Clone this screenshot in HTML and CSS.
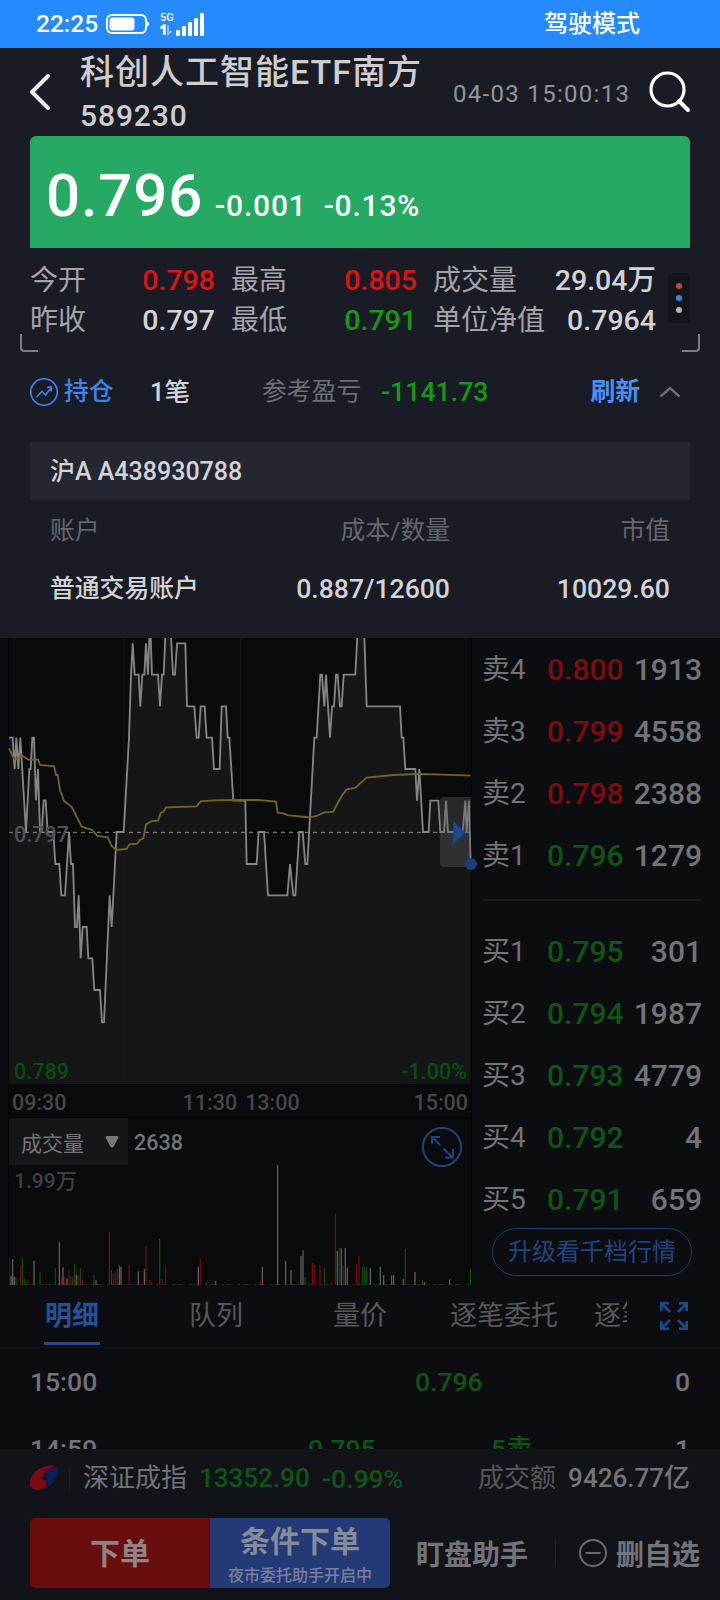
FILE: index.html
```html
<!DOCTYPE html>
<html lang="zh-CN">
<head>
    <meta charset="UTF-8">
    <title>科创人工智能ETF南方 589230</title>
    <meta name="viewport" content="width=device-width, initial-scale=1.0">
    <link rel="stylesheet" href="styles.css">
</head>
<body>
    <div class="status-bar">
        <span class="status-time">22:25</span>
        <svg class="status-battery" width="46" height="22" viewBox="0 0 46 22">
            <rect x="2" y="2" width="39" height="18" rx="5" fill="none" stroke="#fff" stroke-width="2"/>
            <rect x="4.500" y="4.500" width="25" height="13" rx="3" fill="#fff"/>
            <path d="M42 8.500c2.600 0 2.600 5 0 5z" fill="#fff"/>
        </svg>
        <div class="status-net">
            <span class="status-5g">5G</span>
            <svg width="12" height="12" viewBox="0 0 12 12" fill="none" stroke-width="2.800">
                <path d="M0.500 4.500L4.300 1.500V11" stroke="#fff"/>
                <path d="M8 1v9l3.500-3" stroke="#8fc2ff" stroke-width="2"/>
            </svg>
        </div>
        <svg class="status-signal" width="28" height="23" viewBox="0 0 28 23" fill="#fff">
            <rect x="0" y="17" width="4" height="6" rx="1"/>
            <rect x="6" y="13" width="4" height="10" rx="1"/>
            <rect x="12" y="9" width="4" height="14" rx="1"/>
            <rect x="18" y="5" width="4" height="18" rx="1"/>
            <rect x="24" y="0" width="4" height="23" rx="1"/>
        </svg>
        <span class="status-mode">驾驶模式</span>
    </div>

    <!-- Quote panel -->
    <div class="panel">
        <div class="header">
            <svg class="back" width="22" height="38" viewBox="0 0 22 38" fill="none" stroke="#ececf0" stroke-width="4" stroke-linecap="round" stroke-linejoin="round">
                <path d="M18 3L2 19l16 16"/>
            </svg>
            <div class="title">
                <div class="title-name">科创人工智能ETF南方</div>
                <div class="title-code">589230</div>
            </div>
            <span class="header-time">04-03 15:00:13</span>
            <svg class="search" width="42" height="42" viewBox="0 0 42 42" fill="none" stroke="#fff" stroke-linecap="round">
                <circle cx="18.500" cy="18.500" r="16.500" stroke-width="3.200"/>
                <path d="M30 30l9 9" stroke-width="4"/>
            </svg>
        </div>

        <div class="price-card">
            <span class="price">0.796</span>
            <span class="change">-0.001</span>
            <span class="change percent">-0.13%</span>
        </div>

        <div class="stats-wrap">
            <div class="stats">
                <span class="label">今开</span><span class="num red">0.798</span>
                <span class="label">最高</span><span class="num red">0.805</span>
                <span class="label">成交量</span><span class="num">29.04万</span>
                <span class="label">昨收</span><span class="num">0.797</span>
                <span class="label">最低</span><span class="num green">0.791</span>
                <span class="label">单位净值</span><span class="num">0.7964</span>
            </div>
            <div class="more"><i class="dot dot-red"></i><i class="dot dot-blue"></i><i class="dot"></i></div>
        </div>
        <div class="corners"><i class="corner corner-left"></i><i class="corner corner-right"></i></div>

        <div class="position">
            <svg width="28" height="28" viewBox="0 0 28 28" fill="none" stroke="#3c84ee" stroke-width="1.600">
                <circle cx="14" cy="14" r="13.200"/>
                <path d="M6.500 19l5.500-5.500 3.500 3.500 5.500-7M17 9.500l4.300-.5v4.500"/>
            </svg>
            <span class="position-name">持仓</span>
            <span class="position-count">1笔</span>
            <span class="position-label">参考盈亏</span>
            <span class="position-value">-1141.73</span>
            <span class="refresh">刷新</span>
            <svg class="chevron" width="22" height="12" viewBox="0 0 22 12" fill="none" stroke="#6f7077" stroke-width="2.400">
                <path d="M1.500 10.500L11 2l9.500 8.500"/>
            </svg>
        </div>

        <div class="account-bar">沪A A438930788</div>
        <div class="holding holding-head">
            <span>账户</span><span>成本/数量</span><span>市值</span>
        </div>
        <div class="holding">
            <span>普通交易账户</span><span class="amount">0.887/12600</span><span class="amount">10029.60</span>
        </div>
    </div>

    <div class="trade">
        <div class="charts">
            <div class="chart">
                <!-- 3 units per pixel -->
                <svg class="chart-svg" width="462" height="446" viewBox="27 24 1386 1338" fill="none">
                    <path class="area" d="M27 1362V323H38L44 417 49 323 55 417 61 323 78 606 88 417H92L97 323H102L108 511 114 417 120 606H125L131 511H137L143 606H160L166 702H178L184 796H195L207 606 213 702H219L225 891H231L236 796 242 985 248 891H260L265 985H277L283 1080H300L306 1177H312L329 796 335 891 350 606H371L387 323 393 134 398 40 404 134H416L421 229 427 134H433L438 40 444 134 448 20H452L456 134H474L480 229 486 134H491L496 20H513L519 134H525L531 40H556L561 229H583L590 323H596L602 229H614L620 323H636L642 417H659L665 229H678L683 323H688L700 512H736L740 702H770L776 606H792L804 796H862L870 702 880 796H886L898 606H908L916 702H922L943 323H950L961 134H966L973 229 978 134 990 323 996 229H1002L1008 134H1013L1020 229H1025L1031 134H1066L1072 20H1093L1100 229H1200L1205 323H1210L1216 417H1246L1251 512 1258 417 1269 606H1286L1291 512H1315L1321 606H1332L1338 512 1344 606H1388L1396 512 1400 606 1407 512 1412 702V1362z"/>
                    <path class="grid" d="M372 24V1362M722 24V1362"/>
                    <path class="base" d="M27 607H1413"/>
                    <path class="line" d="M27 323H38L44 417 49 323 55 417 61 323 78 606 88 417H92L97 323H102L108 511 114 417 120 606H125L131 511H137L143 606H160L166 702H178L184 796H195L207 606 213 702H219L225 891H231L236 796 242 985 248 891H260L265 985H277L283 1080H300L306 1177H312L329 796 335 891 350 606H371L387 323 393 134 398 40 404 134H416L421 229 427 134H433L438 40 444 134 448 20H452L456 134H474L480 229 486 134H491L496 20H513L519 134H525L531 40H556L561 229H583L590 323H596L602 229H614L620 323H636L642 417H659L665 229H678L683 323H688L700 512H736L740 702H770L776 606H792L804 796H862L870 702 880 796H886L898 606H908L916 702H922L943 323H950L961 134H966L973 229 978 134 990 323 996 229H1002L1008 134H1013L1020 229H1025L1031 134H1066L1072 20H1093L1100 229H1200L1205 323H1210L1216 417H1246L1251 512 1258 417 1269 606H1286L1291 512H1315L1321 606H1332L1338 512 1344 606H1388L1396 512 1400 606 1407 512 1412 702"/>
                    <path class="average" d="M27 355L38 378 45 388 58 385 64 376 85 389H114L120 405 162 409 168 435H173L180 480 192 513 216 532 245 590 277 600 292 618 323 622 335 648 348 660 380 657 388 643 412 641 420 630 430 625 438 583 456 573 474 572 482 549 490 546 498 532 590 529 602 514 640 511 700 510 775 510 828 515 833 548 850 550 865 556 920 561 930 562 950 558 970 548 1000 545 1010 525 1025 498 1040 478 1066 474 1080 460 1100 443 1180 435 1250 432 1330 434 1412 437"/>
                    <path d="M1332 501H1413V711H1332Q1320 711 1320 699V513Q1320 501 1332 501z" fill="#606068" fill-opacity=".35"/>
                    <path d="M1360 573L1396 607 1360 642z" fill="#1c488c"/>
                    <circle cx="1413" cy="702" r="18" fill="#183f7c"/>
                </svg>
                <span class="tag tag-mid">0.797</span>
                <span class="tag tag-low">0.789</span>
                <span class="tag tag-pct">-1.00%</span>
            </div>
            <div class="axis"><span>09:30</span><span class="axis-mid">11:30</span><span>13:00</span><span class="axis-end">15:00</span></div>
            <div class="vol-head">
                <div class="vol-select">成交量
                    <svg width="14" height="12" viewBox="0 0 14 12" fill="#77787b"><path d="M2 0h10q2 0 1.200 2L9 10q-2 3-4 0L.8 2Q0 0 2 0z"/></svg>
                </div>
                <span class="vol-now">2638</span>
                <svg class="vol-expand" width="40" height="40" viewBox="0 0 40 40" fill="none" stroke="#1e437d" stroke-width="2">
                    <circle cx="20" cy="20" r="19"/>
                    <path d="M18.500 18.500L10 10M10 17V10h8M21.500 21.500L30 30M31 22v8.500h-8"/>
                </svg>
            </div>
            <div class="volume">
                <svg width="462" height="120" viewBox="27 255 1386 360" fill="none" stroke-width="3.500">
                    <path stroke="#3c3e40" stroke-width="2" stroke-dasharray="8 7 15 4 3 12" d="M27 614H1413"/>
                    <path stroke="#666769" d="M33 615V588M38 615V537M43 615V590M102 615V542M178 615V486M189 615V562M201 615V596M230 615V585M288 615V600M358 615V557M363 615V560M415 615V573M433 615V567M595 615V560M647 615V603M787 615V560M833 615V255M857 615V543M873 615V570M903 615V528M909 615V511M1012 615V512M1024 615V505M1036 615V504M1042 615V563M1111 615V564M1141 615V560M1151 615V585M1175 615V585M1181 615V585M1210 615V597M1245 615V576M1273 615V607M1349 615V598"/>
                    <path stroke="#7d090b" d="M28 615V530M62 615V557M84 615V601M184 615V590M195 615V592M207 615V568M213 615V590M235 615V586M247 615V600M328 615V455M340 615V580M346 615V575M352 615V568M387 615V555M438 615V498M450 615V600M455 615V605M486 615V597M497 615V557M601 615V536M781 615V605M893 615V605M937 615V549M943 615V555M960 615V557M995 615V604M1006 615V400M1030 615V557M1070 615V553M1077 615V529"/>
                    <path stroke="#0b5410" d="M48 615V592M67 615V533M73 615V597M78 615V602M120 615V576M166 615V565M218 615V590M224 615V551M241 615V565M282 615V585M334 615V570M479 615V476M619 615V606M915 615V592M973 615V564M1018 615V503M1088 615V560M1094 615V560M1100 615V560M1216 615V507M1267 615V600M1411 615V568"/>
                </svg>
                <span class="tag vol-max">1.99万</span>
            </div>
        </div>

        <div class="book">
            <div class="book-row"><span>卖4</span><span class="red">0.800</span><span class="qty">1913</span></div>
            <div class="book-row"><span>卖3</span><span class="red">0.799</span><span class="qty">4558</span></div>
            <div class="book-row"><span>卖2</span><span class="red">0.798</span><span class="qty">2388</span></div>
            <div class="book-row"><span>卖1</span><span class="green">0.796</span><span class="qty">1279</span></div>
            <div class="book-line"></div>
            <div class="book-row"><span>买1</span><span class="green">0.795</span><span class="qty">301</span></div>
            <div class="book-row"><span>买2</span><span class="green">0.794</span><span class="qty">1987</span></div>
            <div class="book-row"><span>买3</span><span class="green">0.793</span><span class="qty">4779</span></div>
            <div class="book-row"><span>买4</span><span class="green">0.792</span><span class="qty">4</span></div>
            <div class="book-row"><span>买5</span><span class="green">0.791</span><span class="qty">659</span></div>
            <div class="upgrade">升级看千档行情</div>
        </div>
    </div>

    <div class="tabs">
        <div class="tab-list">
            <span class="tab active">明细</span>
            <span class="tab">队列</span>
            <span class="tab">量价</span>
            <span class="tab">逐笔委托</span>
            <span class="tab tab-cut">逐笔</span>
        </div>
        <svg width="30" height="30" viewBox="0 0 30 30" fill="none" stroke="#1d4a8d" stroke-width="2.600">
            <path d="M11 11L3 3M2.300 10V2.300H10M19 11l8-8M20 2.300h7.700V10M11 19l-8 8M2.300 20v7.700H10M19 19l8 8M20 27.700h7.700V20"/>
        </svg>
    </div>

    <div class="ticks">
        <div class="tick"><span>15:00</span><span class="tick-price green">0.796</span><span class="tick-side"></span><span class="tick-qty">0</span></div>
        <div class="tick tick-split"><span>14:59</span><span class="tick-price green">0.795</span><span class="tick-side green">5卖</span><span class="tick-qty">1</span></div>
    </div>

    <!-- Bottom bar -->
    <div class="footer">
        <div class="index-row">
            <svg class="index-logo" width="28" height="26" viewBox="0 0 28 26">
                <path d="M26 1Q14-1 5 7-1 13 0 20q2 6 9 5 8-2 8-10-3 1-5-1 1-9 14-13z" fill="#7c0a12"/>
                <path d="M27 1Q15 4 14 12q4 0 4 5-1 5-5 8Q29 18 27 1z" fill="#061f58"/>
            </svg>
            <i class="index-divider"></i>
            <span class="index-name">深证成指</span>
            <span class="index-value green">13352.90</span>
            <span class="index-pct green">-0.99%</span>
            <span class="index-label">成交额</span>
            <span class="index-amount">9426.77亿</span>
        </div>
        <div class="actions">
            <div class="btn btn-order">下单</div>
            <div class="btn btn-cond">条件下单<small>夜市委托助手开启中</small></div>
            <span class="watch">盯盘助手</span>
            <i class="action-divider"></i>
            <svg width="28" height="28" viewBox="0 0 28 28" fill="none" stroke="#68696d" stroke-width="2">
                <circle cx="14" cy="14" r="13"/>
                <path d="M6.500 14h15"/>
            </svg>
            <span class="remove">删自选</span>
        </div>
    </div>
</body>
</html>
```
FILE: styles.css
```css
* {
    box-sizing: border-box;
}

body {
    margin: 0;
    width: 720px;
    height: 1600px;
    overflow: hidden;
    background-color: #0c0d11;
    color: #737477;
    font-family: Roboto, 'Noto Sans CJK SC', sans-serif;
    font-weight: 500;
    white-space: nowrap;
}

svg {
    display: block;
    flex-shrink: 0;
}

/* Status bar */
.status-bar {
    height: 48px;
    padding-left: 36px;
    background-color: #248afd;
    color: #fff;
    font-size: 24px;
    display: flex;
    align-items: center;
}

.status-time {
    width: 69px;
    font-size: 24.5px;
    line-height: 50px;
}

.status-net {
    width: 13px;
    margin: 0 3px 0 9px;
}

.status-5g {
    display: block;
    font-size: 11px;
    line-height: 12px;
}

.status-mode {
    margin-left: auto;
    margin-right: 80px;
    line-height: 50px;
}

/* Quote panel */
.panel {
    position: relative;
    z-index: 1;
    height: 590px;
    background-color: #1a1c25;
    color: #d3d3d8;
}

.panel .red {
    color: #dc1414;
}

.panel .green {
    color: #159a18;
}

.header {
    height: 88px;
    padding: 0 29px 0 30px;
    display: flex;
    align-items: center;
}

.title {
    margin-left: 28px;
    width: 373px;
    color: #ceced1;
}

.title-name {
    font-size: 34px;
    letter-spacing: 1px;
    line-height: 48px;
}

.title-code {
    font-size: 30px;
    letter-spacing: 0.9px;
    line-height: 40px;
}

.header-time {
    width: 196px;
    font-size: 24px;
    font-weight: 400;
    letter-spacing: 1.3px;
    color: #93949c;
    padding-top: 3px;
}

.price-card {
    height: 112px;
    margin: 0 30px;
    padding: 25px 0 0 16px;
    border-radius: 6px 6px 0 0;
    background-color: #26a962;
    color: #fff;
    display: flex;
    align-items: baseline;
    line-height: 70px;
}

.price {
    font-size: 60px;
    letter-spacing: 0.8px;
}

.change {
    margin-left: 12px;
    font-size: 30px;
    letter-spacing: 0.8px;
}

.percent {
    margin-left: 17px;
}

.stats-wrap {
    padding: 12px 30px 0;
    display: flex;
    justify-content: space-between;
    align-items: flex-start;
}

.stats {
    width: 627px;
    display: grid;
    grid-template-columns: 87px 98px 103px 99px 117px 122px;
    line-height: 41px;
    grid-auto-rows: 40px;
    font-size: 28px;
}

.stats .label {
    color: #a3a3a9;
    font-weight: 400;
}

.stats .label:nth-child(6n+3),
.stats .label:nth-child(6n+5) {
    padding-left: 16px;
}

.stats .num {
    font-size: 28.5px;
    text-align: right;
}

.more {
    width: 22px;
    height: 50px;
    margin-top: 13px;
    border-radius: 4px;
    background-color: #14151a;
    display: flex;
    flex-direction: column;
    align-items: center;
    justify-content: center;
    gap: 6px;
}

.dot {
    width: 6px;
    height: 6px;
    border-radius: 50%;
    background-color: #b5b5b8;
}

.dot-red {
    background-color: #c9453f;
}

.dot-blue {
    background-color: #3b82ea;
}

.corners {
    height: 18px;
    margin-top: -6px;
    padding: 0 20px;
    display: flex;
    justify-content: space-between;
}

.corner {
    width: 18px;
    height: 18px;
    border: 0 solid #7c7d83;
    border-bottom-width: 2px;
}

.corner-left {
    border-left-width: 2px;
    border-bottom-left-radius: 4px;
}

.corner-right {
    border-right-width: 2px;
    border-bottom-right-radius: 4px;
}

.position {
    height: 80px;
    padding: 0 39px 0 30px;
    display: flex;
    align-items: center;
    font-size: 24.8px;
    line-height: 42px;
}

.position-name {
    width: 87px;
    padding-left: 6px;
    color: #3c84ee;
}

.position-count {
    width: 117px;
    padding-left: 5px;
    font-size: 25.5px;
}

.position-label {
    width: 119px;
    color: #6e6f75;
    font-weight: 400;
}

.position-value {
    font-size: 26.7px;
    color: #159a18;
}

.refresh {
    margin-left: auto;
    margin-right: 19px;
    color: #4a90f2;
    font-weight: 700;
}

.account-bar {
    height: 58px;
    margin: 10px 30px 0;
    padding-left: 20px;
    background-color: #242632;
    font-size: 25px;
    line-height: 60px;
}

.holding {
    height: 58px;
    padding: 0 50px;
    display: grid;
    grid-template-columns: 200px 200px 220px;
    font-size: 24.8px;
    line-height: 62px;
    text-align: right;
}

.holding span:first-child {
    text-align: left;
}

.holding .amount {
    font-size: 26.6px;
}

.holding-head {
    color: #66676d;
    font-weight: 400;
}

/* Charts and order book */
.trade {
    height: 647px;
    display: flex;
}

.red {
    color: #7f0b0e;
}

.green {
    color: #0d5613;
}

.charts {
    width: 463px;
    margin-left: 8px;
    border-left: 1px solid #020203;
    background-color: #090a0c;
    box-shadow: 1px 0 0 #020203;
}

.chart {
    position: relative;
    height: 446px;
}

.chart-svg {
    overflow: visible;
}

.area {
    fill: #151618;
}

.grid {
    stroke: #17181b;
    stroke-width: 3;
}

.base {
    stroke: #88898b;
    stroke-width: 3;
    stroke-dasharray: 12 12;
}

.line {
    stroke: #858587;
    stroke-width: 5.5;
}

.average {
    stroke: #766322;
    stroke-width: 5.5;
}

.tag {
    position: absolute;
    font-size: 21.5px;
    line-height: 26px;
    color: #3e3f42;
}

.tag-mid {
    left: 5px;
    top: 184px;
    color: #515254;
}

.tag-low {
    left: 5px;
    bottom: -1px;
    color: #0a4d10;
}

.tag-pct {
    right: 4px;
    bottom: -1px;
    color: #0a4d10;
}

.axis {
    height: 34px;
    padding: 0 3px;
    border-top: 1px solid #020203;
    border-bottom: 1px solid #020203;
    display: flex;
    gap: 8px;
    font-size: 21.5px;
    line-height: 36px;
    color: #46474a;
}

.axis-mid {
    margin-left: 108px;
}

.axis-end {
    margin-left: auto;
}

.vol-head {
    height: 47px;
    display: flex;
}

.vol-select {
    width: 119px;
    padding: 0 9px 0 12px;
    background-color: #15161a;
    display: flex;
    align-items: center;
    justify-content: space-between;
    font-size: 21px;
    font-weight: 400;
}

.vol-now {
    padding-left: 6px;
    font-size: 21.5px;
    line-height: 50px;
}

.vol-expand {
    margin: 9px 9px 0 auto;
}

.volume {
    position: relative;
    height: 120px;
}

.vol-max {
    left: 5px;
    top: 3px;
    font-size: 21px;
}

.book {
    width: 220px;
    margin-left: 11px;
    font-size: 30px;
}

.book-row {
    height: 62px;
    display: grid;
    grid-template-columns: 65px 79px 76px;
    line-height: 64px;
}

.book-row span:first-child {
    font-size: 28px;
    font-weight: 400;
}

.qty {
    text-align: right;
}

.book-line {
    height: 2px;
    margin: 13px 0 19px;
    background-color: #1a1b1e;
}

.book .upgrade {
    width: 200px;
    height: 48px;
    margin: -2px 0 0 10px;
    border: 1px solid #1b3d70;
    border-radius: 24px;
    color: #1e4580;
    font-size: 24px;
    font-weight: 400;
    line-height: 47px;
    text-align: center;
}

/* Detail tabs */
.tabs {
    height: 63px;
    padding: 0 31px 0 44px;
    border-bottom: 1px solid #101115;
    display: flex;
    align-items: center;
    justify-content: space-between;
}

.tab-list {
    width: 583px;
    overflow: hidden;
    display: flex;
    font-size: 27px;
    font-weight: 400;
    line-height: 62px;
    color: #56575a;
}

.tab {
    margin-right: 90px;
    flex-shrink: 0;
}

.tab:nth-child(3) {
    margin-right: 63px;
}

.tab:nth-child(4) {
    margin-right: 36px;
}

.tab.active {
    height: 60px;
    width: 56px;
    margin-right: 89px;
    padding-left: 1px;
    border-bottom: 3px solid #2a4a80;
    color: #23529a;
    font-weight: 700;
}

.ticks {
    height: 101px;
    overflow: hidden;
}

.tick {
    height: 67px;
    padding: 0 30px;
    display: grid;
    grid-template-columns: 385px 100px 0 175px;
    font-size: 26.5px;
    line-height: 68px;
}

.tick-split {
    grid-template-columns: 278px 183px 100px 99px;
}

.tick-qty {
    text-align: right;
}

/* Bottom bar */
.footer {
    height: 151px;
    background-color: #121319;
}

.index-row {
    height: 58px;
    padding: 0 30px;
    display: flex;
    align-items: center;
    font-size: 26px;
    line-height: 59px;
}

.index-divider {
    width: 1px;
    height: 24px;
    margin: 0 13px 0 11px;
    background-color: #1d1e23;
}

.index-name {
    width: 116px;
    font-weight: 400;
}

.index-value {
    width: 123px;
}

.index-pct {
    font-size: 26.5px;
}

.index-label {
    margin-left: auto;
    margin-right: 12px;
    color: #56575b;
    font-weight: 400;
}

.actions {
    height: 70px;
    margin: 11px 20px 0 30px;
    display: flex;
    align-items: center;
    font-size: 28px;
}

.btn {
    width: 180px;
    height: 70px;
    border-radius: 5px 0 0 5px;
    background-color: #690d0f;
    color: #8e8486;
    font-size: 30px;
    font-weight: 700;
    line-height: 71px;
    text-align: center;
}

.btn-cond {
    border-radius: 0 5px 5px 0;
    background-color: #243a76;
    color: #868b9a;
    line-height: 48px;
}

.btn small {
    display: block;
    font-size: 16px;
    font-weight: 500;
    line-height: 20px;
    color: #7480a0;
}

.watch {
    margin-left: 26px;
    font-weight: 700;
}

.action-divider {
    width: 1px;
    height: 28px;
    margin: 0 23px 0 27px;
    background-color: #202126;
}

.remove {
    margin-left: auto;
    font-weight: 700;
}
```
